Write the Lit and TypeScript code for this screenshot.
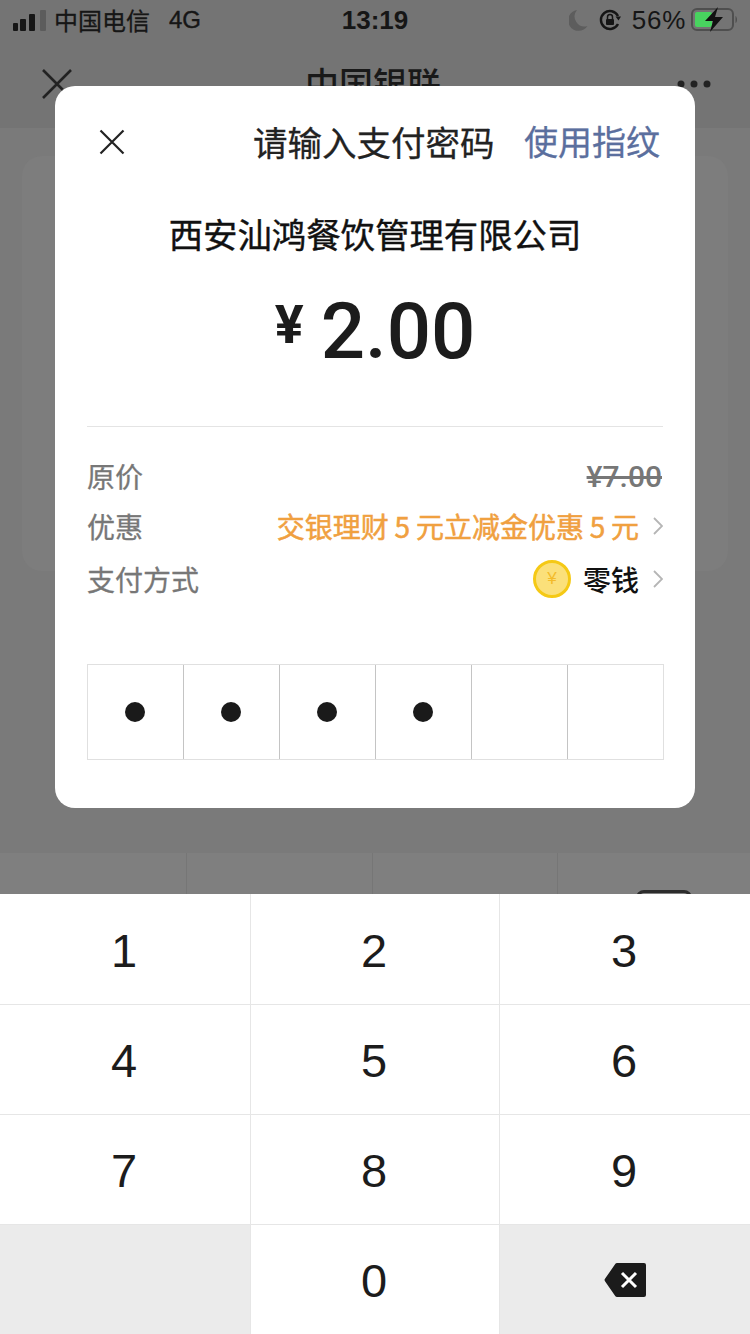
import { LitElement, css, html } from "lit";
import { customElement } from "lit/decorators.js";

@customElement("app-root")
export class AppRoot extends LitElement {
  static styles = css`
    :host {
      display: block;
      width: 750px;
      font-family: "Liberation Sans", "Noto Sans CJK SC", sans-serif;
    }
    .screen {
      position: relative;
      width: 750px;
      height: 1334px;
      overflow: hidden;
      display: flex;
      flex-direction: column;
      background: #7a7a7a;
      color: #191919;
    }

    /* status bar */
    .status {
      height: 40px;
      flex: none;
      display: flex;
      align-items: center;
      padding: 0 12px 0 13px;
      background: #747474;
      font-size: 24px;
      color: #161616;
    }
    .carrier {
      margin-left: 7px;
      font-family: "Noto Sans CJK SC", sans-serif;
      line-height: 40px;
      -webkit-text-stroke: 0.3px #161616;
    }
    .net {
      margin-left: 19px;
      -webkit-text-stroke: 0.4px #161616;
    }
    .time {
      position: absolute;
      left: 0;
      right: 0;
      top: 0;
      line-height: 41px;
      text-align: center;
      font-size: 26px;
      font-weight: 700;
    }
    .status-right {
      margin-left: auto;
      display: flex;
      align-items: center;
    }
    .moon {
      margin-right: 10px;
    }
    .pct {
      margin: 0 4px 0 10px;
      font-size: 26px;
      letter-spacing: 0.7px;
    }

    /* page behind the dialog */
    .nav {
      height: 88px;
      flex: none;
      display: flex;
      align-items: center;
      justify-content: space-between;
      padding: 0 38px 0 42px;
      background: #747474;
    }
    .nav-title {
      font-family: "Noto Sans CJK SC", sans-serif;
      font-size: 34px;
      font-weight: 500;
      margin: 0 0 4px -2px;
    }
    .body {
      flex: 1;
      display: flex;
      flex-direction: column;
      padding-top: 28px;
    }
    .panel {
      height: 415px;
      margin: 0 22px;
      background: #7d7d7d;
      border-radius: 20px;
    }
    .tabs {
      margin-top: auto;
      height: 41px;
      display: grid;
      grid-template-columns: 187px 186px 185px 1fr;
      background: #7f7f7f;
      overflow: hidden;
    }
    .tab {
      border-right: 1px solid #767676;
    }
    .tab:last-child {
      border-right: 0;
      padding: 37px 0 0 78px;
    }
    .tab-icon {
      width: 50px;
      height: 30px;
      border: 3px solid #2c2c2c;
      border-radius: 8px;
    }

    /* keypad */
    .keypad {
      flex: none;
      height: 440px;
      display: grid;
      grid-template-columns: 251px 249px 250px;
      grid-template-rows: 111px 110px 110px 109px;
      background: #fff;
    }
    .key {
      display: flex;
      align-items: center;
      justify-content: center;
      box-sizing: border-box;
      padding: 2px 2px 0 0;
      border-bottom: 1px solid #e6e6e6;
      border-right: 1px solid #e6e6e6;
      font-size: 47px;
      color: #1c1c1c;
    }
    .key:nth-child(3n) {
      border-right: 0;
    }
    .key:nth-last-child(-n + 3) {
      border-bottom: 0;
    }
    .key.blank {
      background: #ebebeb;
      padding: 0;
    }

    /* dialog */
    .dialog {
      position: absolute;
      left: 55px;
      top: 86px;
      width: 640px;
      height: 722px;
      box-sizing: border-box;
      padding: 0 32px;
      background: #fff;
      border-radius: 20px;
    }
    .head {
      height: 112px;
      display: flex;
      align-items: center;
      margin: 0 3px 0 12px;
    }
    .head-title {
      margin: 0 0 3px 128px;
      font-size: 34.5px;
      color: #222;
      -webkit-text-stroke: 0.3px #222;
    }
    .head-link {
      margin: 0 0 2px auto;
      font-size: 34px;
      color: #5b6f9e;
      -webkit-text-stroke: 0.3px #5b6f9e;
    }
    .head span {
      font-family: "Noto Sans CJK SC", sans-serif;
      line-height: 110px;
    }
    .merchant {
      margin-top: 8px;
      text-align: center;
      font-family: "Noto Sans CJK SC", sans-serif;
      font-size: 34.4px;
      line-height: 54px;
      color: #111;
      -webkit-text-stroke: 0.4px #111;
    }
    .amount {
      margin-top: 27px;
      height: 90px;
      display: flex;
      align-items: center;
      justify-content: center;
      font-family: Roboto, sans-serif;
      color: #1c1c1c;
    }
    .currency {
      font-size: 54px;
      font-weight: 700;
      margin: 0 17px 14px 0;
      line-height: 1;
    }
    .value {
      font-size: 78px;
      font-weight: 500;
      line-height: 90px;
    }
    .rows {
      margin-top: 49px;
      border-top: 1px solid #e4e4e4;
      padding-top: 24px;
      font-family: "Noto Sans CJK SC", sans-serif;
      font-size: 28px;
      color: #777;
      -webkit-text-stroke: 0.3px #777;
    }
    .row {
      display: flex;
      align-items: center;
      justify-content: space-between;
      height: 50px;
    }
    .row.pay {
      height: 56px;
    }
    .row-end {
      display: flex;
      align-items: center;
    }
    .strike {
      font-family: Roboto, sans-serif;
      font-weight: 500;
      font-size: 30px;
      text-decoration: line-through;
      margin-right: 1px;
      -webkit-text-stroke: 0;
    }
    .promo {
      color: #f0a040;
      word-spacing: -0.5px;
      -webkit-text-stroke: 0.5px #f0a040;
    }
    .wallet {
      color: #111;
      font-weight: 500;
      margin-left: 12px;
      -webkit-text-stroke: 0;
    }
    .chev {
      margin-left: 14px;
      display: block;
    }
    .coin {
      width: 38px;
      height: 38px;
      box-sizing: border-box;
      border: 3px solid #f5c915;
      border-radius: 50%;
      background: #fbe07a;
      color: #f3bb2a;
      display: flex;
      align-items: center;
      justify-content: center;
      font-family: "Liberation Sans", sans-serif;
      font-size: 17px;
      -webkit-text-stroke: 0;
    }
    .pin {
      margin-top: 57px;
      width: 577px;
      height: 96px;
      box-sizing: border-box;
      display: grid;
      grid-template-columns: repeat(5, 96px) 1fr;
      border: 1px solid #e0e0e0;
    }
    .cell {
      display: flex;
      align-items: center;
      justify-content: center;
      border-right: 1px solid #c4c4c4;
    }
    .cell:last-child {
      border-right: 0;
    }
    .dot {
      width: 20px;
      height: 20px;
      margin-right: 2px;
      border-radius: 50%;
      background: #1a1a1a;
    }
  `;

  render() {
    const digits = ["1", "2", "3", "4", "5", "6", "7", "8", "9"];
    return html`
      <div class="screen">
        <div class="status">
          <svg width="34" height="22" viewBox="0 0 34 22">
            <rect x="0" y="14" width="5" height="8" rx="1" fill="#161616" />
            <rect x="7" y="10" width="6" height="12" rx="1" fill="#161616" />
            <rect x="16" y="5" width="6" height="17" rx="1" fill="#161616" />
            <rect x="27" y="1" width="6" height="21" rx="1" fill="#5c5c5c" />
          </svg>
          <span class="carrier">中国电信</span>
          <span class="net">4G</span>
          <div class="time">13:19</div>
          <div class="status-right">
            <svg class="moon" width="19" height="22" viewBox="0 0 19 22">
              <path d="M8 1A10.500 10.500 0 1 0 18.500 17 10 10 0 0 1 8 1z" fill="#5d5d5d" />
            </svg>
            <svg width="24" height="24" viewBox="0 0 24 24">
              <path d="M20 16a9 9 0 1 1 0-8" fill="none" stroke="#151515" stroke-width="2.4" />
              <path d="M17.500 8.500h5.500l-2.500 4z" fill="#151515" />
              <rect x="8" y="11" width="8" height="6" rx="1" fill="#151515" />
              <path d="M9.500 11V9a2.500 2.500 0 0 1 5 0v2" fill="none" stroke="#151515" stroke-width="1.500" />
            </svg>
            <span class="pct">56%</span>
            <svg width="48" height="26" viewBox="0 0 48 26">
              <rect x="2" y="2" width="41" height="21" rx="5" fill="none" stroke="#4f4f4f" stroke-width="2" />
              <rect x="5" y="5" width="17" height="15" rx="2" fill="#48d35f" />
              <path d="M45.500 9c2 1 2 6 0 7z" fill="#4f4f4f" />
              <path d="M28 0 15 14h8l-3 11 13-15h-8z" fill="#111" />
            </svg>
          </div>
        </div>
        <div class="nav">
          <svg width="30" height="30" viewBox="0 0 30 30">
            <path d="M1 1l28 28M29 1 1 29" stroke="#222" stroke-width="2.600" />
          </svg>
          <span class="nav-title">中国银联</span>
          <svg width="36" height="10" viewBox="0 0 36 10">
            <circle cx="5" cy="5" r="3.500" fill="#222" />
            <circle cx="18" cy="5" r="3.500" fill="#222" />
            <circle cx="31" cy="5" r="3.500" fill="#222" />
          </svg>
        </div>
        <div class="body">
          <div class="panel"></div>
          <div class="tabs">
            <div class="tab"></div>
            <div class="tab"></div>
            <div class="tab"></div>
            <div class="tab"><div class="tab-icon"></div></div>
          </div>
        </div>
        <div class="keypad">
          ${digits.map((d) => html`<div class="key">${d}</div>`)}
          <div class="key blank"></div>
          <div class="key">0</div>
          <div class="key blank">
            <svg width="42" height="34" viewBox="0 0 42 34">
              <path d="M13 0h27a2 2 0 0 1 2 2v30a2 2 0 0 1-2 2H13a2 2 0 0 1-1.600-.8L1 18.200a2 2 0 0 1 0-2.400L11.400.8A2 2 0 0 1 13 0z" fill="#1b1b1b" />
              <path d="M18 10l14 14M32 10 18 24" stroke="#fff" stroke-width="3" />
            </svg>
          </div>
        </div>

        <div class="dialog">
          <div class="head">
            <svg width="26" height="26" viewBox="0 0 26 26">
              <path d="M1.500 1.500l23 23M24.500 1.500l-23 23" stroke="#222" stroke-width="2.200" />
            </svg>
            <span class="head-title">请输入支付密码</span>
            <span class="head-link">使用指纹</span>
          </div>
          <div class="merchant">西安汕鸿餐饮管理有限公司</div>
          <div class="amount">
            <span class="currency">¥</span>
            <span class="value">2.00</span>
          </div>
          <div class="rows">
            <div class="row">
              <span>原价</span>
              <span class="strike">¥7.00</span>
            </div>
            <div class="row">
              <span>优惠</span>
              <div class="row-end">
                <span class="promo">交银理财 5 元立减金优惠 5 元</span>
                ${this.chevron()}
              </div>
            </div>
            <div class="row pay">
              <span>支付方式</span>
              <div class="row-end">
                <div class="coin">¥</div>
                <span class="wallet">零钱</span>
                ${this.chevron()}
              </div>
            </div>
          </div>
          <div class="pin">
            ${[1, 1, 1, 1, 0, 0].map(
              (on) => html`<div class="cell">${on ? html`<div class="dot"></div>` : ""}</div>`
            )}
          </div>
        </div>
      </div>
    `;
  }

  chevron() {
    return html`<svg class="chev" width="10" height="18" viewBox="0 0 10 18">
      <path d="M1 1l8 8-8 8" fill="none" stroke="#b5b5b5" stroke-width="1.800" />
    </svg>`;
  }
}
